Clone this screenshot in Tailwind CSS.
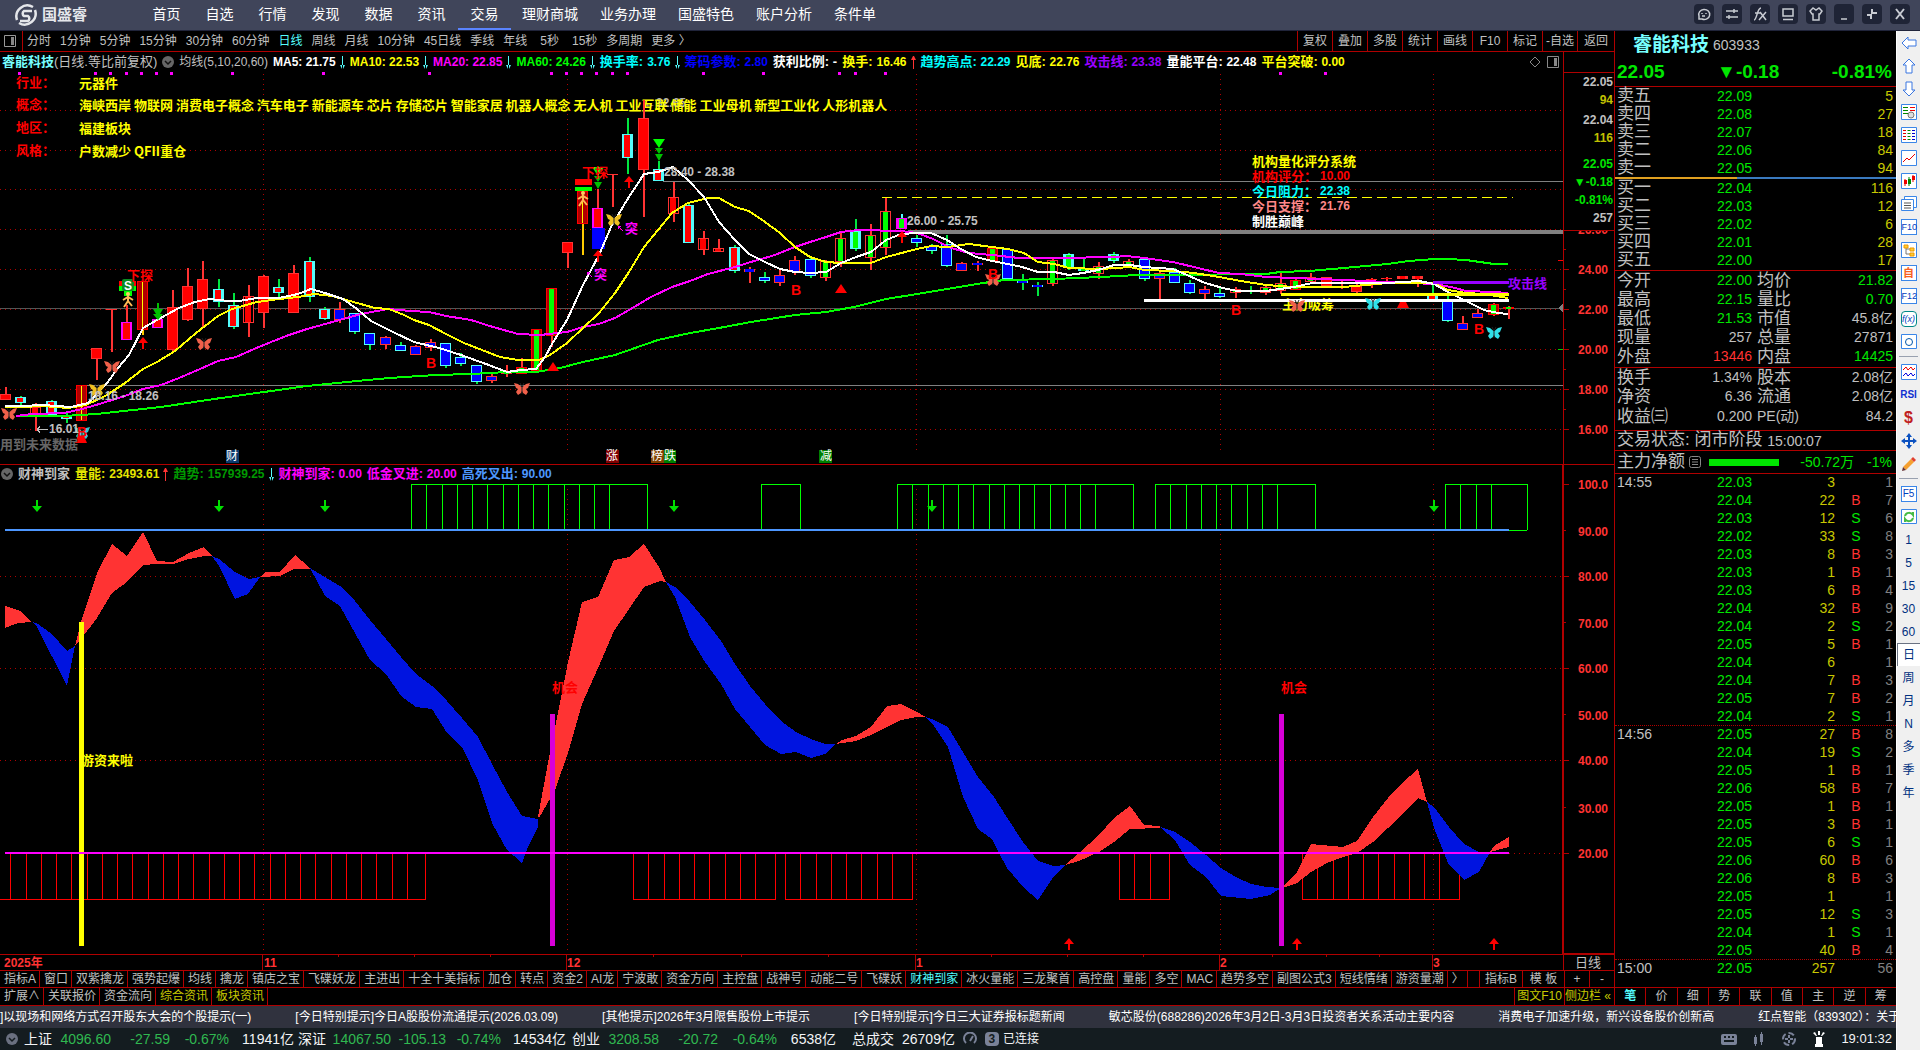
<!DOCTYPE html>
<html lang="zh-CN">
<head>
    <meta charset="UTF-8">
    <meta name="viewport" content="width=device-width, initial-scale=1.0">
    <title>睿能科技 603933</title>
    <script src="https://cdn.jsdelivr.net/npm/@tailwindcss/browser@4"></script>
</head>
<body class="min-h-screen flex flex-col bg-black text-[#c0c0c0] text-xs overflow-x-hidden font-['Liberation_Sans','Noto_Sans_CJK_SC',sans-serif]">

    <!-- shared symbols -->
    <svg class="hidden">
        <symbol id="butterfly" viewBox="0 0 16 14">
            <path d="M7.5 5 4 2 0 1l2 5 2 1-2 3 2 3 3-2 1-2 1 2 3 2 2-3-2-3 2-1 2-5-4 1-3.500 3z" fill="currentColor"/>
            <path d="M8 12V5M8 5 6 1M8 5l2-4" stroke="#222" stroke-width="1" fill="none"/>
        </symbol>
        <symbol id="runner" viewBox="0 0 12 16">
            <circle cx="6" cy="2" r="2" fill="#fc6"/>
            <path d="M6 4v5l-4 6M6 9l4 5M1 8l5-3 5 3" stroke="#fb5" stroke-width="2" fill="none"/>
        </symbol>
        <symbol id="up" viewBox="0 0 10 12">
            <path d="M5 0l5 6H6v6H4V6H0z" fill="currentColor"/>
        </symbol>
        <symbol id="down" viewBox="0 0 10 12">
            <path d="M5 12l5-6H6V0H4v6H0z" fill="currentColor"/>
        </symbol>
        <symbol id="thin-up" viewBox="0 0 5 13">
            <path d="M2 0h1v13H2zM0 4l2-4h1l2 4z" fill="currentColor"/>
        </symbol>
        <symbol id="thin-down" viewBox="0 0 5 13">
            <path d="M2 0h1v13H2zM0 9l2 4h1l2-4z" fill="currentColor"/>
        </symbol>
        <symbol id="triple" viewBox="0 0 12 24">
            <path d="M0 0h12L6 9z" fill="#0f0"/>
            <path d="M2 9h8l-4 6zM2 15h8l-4 7z" fill="#00c000"/>
        </symbol>
        <symbol id="fold" viewBox="0 0 12 12">
            <circle cx="6" cy="6" r="6" fill="#666"/>
            <path d="M3 5l3 3 3-3" stroke="#111" stroke-width="1.500" fill="none"/>
        </symbol>
    </svg>

    <!-- top menu -->
    <header class="h-[31px] flex items-center bg-[#40455a] border-b border-[#20243a] text-sm text-white">
        <div class="w-[140px] pl-3.5 flex items-center gap-1">
            <svg class="w-6 h-6" viewBox="0 0 24 24" fill="none" stroke="#e4e6ea" stroke-width="2.500">
                <path d="M19 4A11 11 0 0 0 3 17M5 20A11 11 0 0 0 21 7"/>
                <path d="M18 8h-8a3 3 0 0 0 0 5h4a3 3 0 0 1 0 5H6"/>
            </svg>
            <span class="text-[15px] font-bold text-gray-200">国盛睿</span>
        </div>
        <nav class="h-full flex text-center leading-[29px]">
            <a href="#" class="w-[53px]">首页</a>
            <a href="#" class="w-[53px]">自选</a>
            <a href="#" class="w-[53px]">行情</a>
            <a href="#" class="w-[53px]">发现</a>
            <a href="#" class="w-[53px]">数据</a>
            <a href="#" class="w-[53px]">资讯</a>
            <a href="#" class="w-[53px] border-b-2 border-[#5a84ff]">交易</a>
            <a href="#" class="w-[78px]">理财商城</a>
            <a href="#" class="w-[78px]">业务办理</a>
            <a href="#" class="w-[78px]">国盛特色</a>
            <a href="#" class="w-[78px]">账户分析</a>
            <a href="#" class="w-[64px]">条件单</a>
        </nav>
        <div class="ml-auto mr-2.5 flex gap-2 pb-0.5">
            <button class="w-5 h-5 rounded bg-[#1f2436] p-0.5" aria-label="消息"><svg viewBox="0 0 16 16" fill="none" stroke="#c8cbd2" stroke-width="1.500"><path d="M3 13v-3a5.500 5 0 1 1 3 3zM6 7v1M10 7v1M6 10h3"/></svg></button>
            <button class="w-5 h-5 rounded bg-[#1f2436] p-0.5" aria-label="切换"><svg viewBox="0 0 16 16" fill="none" stroke="#c8cbd2" stroke-width="1.500"><path d="M2 5h12M2 11h12M10 3v4M5 9v4"/></svg></button>
            <button class="w-5 h-5 rounded bg-[#1f2436] p-0.5" aria-label="公式"><svg viewBox="0 0 16 16" fill="none" stroke="#c8cbd2" stroke-width="1.500"><path d="M2 14c3 0 3-12 7-12M3 7h6M8 6l6 8M14 6l-7 8"/></svg></button>
            <button class="w-5 h-5 rounded bg-[#1f2436] p-0.5" aria-label="屏幕"><svg viewBox="0 0 16 16" fill="none" stroke="#c8cbd2" stroke-width="1.500"><path d="M3 3h10v7H3zM3 13.500h10"/></svg></button>
            <button class="w-5 h-5 rounded bg-[#1f2436] p-0.5" aria-label="皮肤"><svg viewBox="0 0 16 16" fill="none" stroke="#c8cbd2" stroke-width="1.500"><path d="M5 2 2 5l2 3h1v6h6V8h1l2-3-3-3-3 2z"/></svg></button>
            <button class="w-5 h-5 rounded bg-[#1f2436] p-0.5" aria-label="最小化"><svg viewBox="0 0 16 16" fill="none" stroke="#c8cbd2" stroke-width="1.500"><path d="M5 13h6"/></svg></button>
            <button class="w-5 h-5 rounded bg-[#1f2436] p-0.5" aria-label="还原"><svg viewBox="0 0 16 16" fill="none" stroke="#c8cbd2" stroke-width="2"><path d="M8 3v4h5M3 9h4v4"/></svg></button>
            <button class="w-5 h-5 rounded bg-[#1f2436] p-0.5" aria-label="关闭"><svg viewBox="0 0 16 16" fill="none" stroke="#c8cbd2" stroke-width="2"><path d="M4 3l8 10M12 3 4 13"/></svg></button>
        </div>
    </header>

    <div class="flex-1 flex">
        <div class="flex-1 min-w-0 flex flex-col">
            <div class="flex-1 flex">

                <!-- charts -->
                <main class="flex-1 min-w-0 flex flex-col">
                    <!-- period bar -->
                    <div class="h-[21px] flex items-center border-b border-[#b00000] whitespace-nowrap">
                        <button class="w-[23px] h-full flex items-center pl-1 border-r border-[#b00000] mr-1" aria-label="侧栏"><svg class="w-3 h-3" viewBox="0 0 12 12"><path d="M.5.5h11v11H.5z" fill="none" stroke="#999"/><path d="M7 2h3v8H7z" fill="#888"/></svg></button>
                        <nav class="flex gap-[9px]">
                            <a href="#">分时</a><a href="#">1分钟</a><a href="#">5分钟</a><a href="#">15分钟</a><a href="#">30分钟</a><a href="#">60分钟</a>
                            <a href="#" class="text-[#54fcfc]">日线</a><a href="#">周线</a><a href="#">月线</a><a href="#">10分钟</a><a href="#">45日线</a><a href="#">季线</a><a href="#">年线</a>
                            <a href="#" class="pl-1">5秒</a><a href="#" class="pl-1">15秒</a><a href="#">多周期</a><a href="#">更多 〉</a>
                        </nav>
                        <div class="ml-auto h-full flex text-center leading-5">
                            <button class="w-[35px] border-l border-[#b00000]">复权</button>
                            <button class="w-[35px] border-l border-[#b00000]">叠加</button>
                            <button class="w-[35px] border-l border-[#b00000]">多股</button>
                            <button class="w-[35px] border-l border-[#b00000]">统计</button>
                            <button class="w-[35px] border-l border-[#b00000]">画线</button>
                            <button class="w-[35px] border-l border-[#b00000]">F10</button>
                            <button class="w-[35px] border-l border-[#b00000]">标记</button>
                            <button class="w-[35px] border-l border-[#b00000]">-自选</button>
                            <button class="w-[37px] border-l border-[#b00000]">返回</button>
                        </div>
                    </div>

                    <!-- main chart legend -->
                    <div class="h-5 flex">
                        <div class="flex-1 flex items-center gap-[5px] pl-0.5 border-r border-[#b00000] text-[13px] font-bold leading-4 whitespace-nowrap">
                            <span class="text-[#7ff]">睿能科技<span class="font-normal text-[#c0c0c0]">(日线.等比前复权)</span></span>
                            <svg class="w-3 h-3"><use href="#fold"/></svg>
                            <span class="font-normal text-xs">均线(5,10,20,60)</span>
                            <span class="flex items-center gap-1 text-xs text-white">MA5: 21.75<svg class="w-[5px] h-[13px] text-[#54fcfc]"><use href="#thin-down"/></svg></span>
                            <span class="flex items-center gap-1 text-xs text-[#ff0]">MA10: 22.53<svg class="w-[5px] h-[13px] text-[#54fcfc]"><use href="#thin-down"/></svg></span>
                            <span class="flex items-center gap-1 text-xs text-[#f0f]">MA20: 22.85<svg class="w-[5px] h-[13px] text-[#54fcfc]"><use href="#thin-down"/></svg></span>
                            <span class="flex items-center gap-1 text-xs text-[#0f0]">MA60: 24.26<svg class="w-[5px] h-[13px] text-[#54fcfc]"><use href="#thin-down"/></svg></span>
                            <span class="flex items-center gap-1 text-[#0ff]">换手率: <b class="text-xs">3.76</b><svg class="w-[5px] h-[13px] text-[#54fcfc]"><use href="#thin-down"/></svg></span>
                            <span class="text-[#00f]">筹码参数: <b class="text-xs">2.80</b></span>
                            <span class="text-white">获利比例: -</span>
                            <span class="flex items-center gap-1 text-[#ff0]">换手: <b class="text-xs">16.46</b><svg class="w-[5px] h-[13px] text-[#f33]"><use href="#thin-up"/></svg></span>
                            <span class="text-[#0ff]">趋势高点: <b class="text-xs">22.29</b></span>
                            <span class="text-[#ff0]">见底: <b class="text-xs">22.76</b></span>
                            <span class="text-[#9900ff]">攻击线: <b class="text-xs">23.38</b></span>
                            <span class="text-white">量能平台: <b class="text-xs">22.48</b></span>
                            <span class="text-[#ff0]">平台突破: <b class="text-xs">0.00</b></span>
                            <svg class="ml-auto mr-1 w-[30px] h-3" viewBox="0 0 30 12" fill="none" stroke="#888"><path d="M6 1l5 5-5 5-5-5zM18.500.5h11v11h-11z"/><path d="M25 2h3v8h-3z" fill="#888" stroke="none"/></svg>
                        </div>
                        <div class="w-[50px]"></div>
                    </div>

                    <!-- main chart -->
                    <svg class="w-full h-auto block" viewBox="0 72 1614 392" font-size="13" font-weight="bold" dominant-baseline="central" shape-rendering="crispEdges">
                        <g stroke="#b00000" stroke-dasharray="1 4">
                            <path d="M0 110.500H1563M0 150.500H1563M0 189.500H1563M0 229.500H1563M0 269.500H1563M0 309.500H1563M0 349.500H1563M0 389.500H1563M0 429.500H1563"/>
                            <path d="M263.500 74V452M567.500 74V452M916.500 74V452M1220.500 74V452M1433.500 74V452"/>
                        </g>
                        <g id="dots"></g>
                        <path d="M663 181.500H1563M87 385.500H1563" stroke="#808080"/>
                        <path d="M0 308.500H1563" stroke="#555"/>
                        <path d="M908 230h655v4H908zM1558 308l5-4v9z" fill="#808080"/>
                        <path d="M882 197.500H1513" stroke="#ff0" stroke-dasharray="10 5"/>

                        <g fill="#f00">
                            <text x="16" y="82">行业：</text>
                            <text x="16" y="104">概念：</text>
                            <text x="16" y="127">地区：</text>
                            <text x="16" y="150">风格：</text>
                        </g>
                        <text x="644" y="103" fill="#b0b0b0" font-size="12">←32.65</text>
                        <g fill="#ff0" class="font-['Noto_Sans_CJK_SC',sans-serif]">
                            <text x="79" y="82">元器件</text>
                            <text x="79" y="104">海峡西岸 物联网 消费电子概念 汽车电子 新能源车 芯片 存储芯片 智能家居 机器人概念 无人机 工业互联 储能 工业母机 新型工业化 人形机器人</text>
                            <text x="79" y="127">福建板块</text>
                            <text x="79" y="150">户数减少 QFII重仓</text>
                        </g>

                        <g id="candles"></g>

                        <!-- moving averages -->
                        <g fill="none" stroke-width="2">
                            <polyline stroke="#0f0" points="16,416 64,416 96,414 161,407 214,399 264,392 307,386 357,381 389,378 436,375 471,374 507,372 536,372 560,368 583,362 615,355 658,340 690,333 719,328 751,322 795,315 826,312 854,307 886,299 917,294 947,289 983,283 1004,280 1054,279 1101,277 1137,275 1198,275 1237,274 1266,274 1280,272 1309,271 1344,268 1387,264 1409,261 1434,259 1448,259 1466,260 1494,264 1508,264"/>
                            <polyline stroke="#f0f" points="16,416 32,414 64,413 82,409 96,405 125,396 143,389 161,385 179,378 200,369 218,361 236,357 254,349 271,342 289,335 307,329 336,321 361,314 388,309 411,311 429,312 446,316 471,320 493,327 518,334 540,335 567,332 583,327 599,324 615,318 629,310 651,297 672,287 690,281 708,274 735,267 754,261 772,256 795,247 810,242 826,237 841,232 858,230 901,231 917,233 933,239 951,248 969,253 992,255 1019,258 1058,258 1114,257 1126,256 1144,258 1173,262 1198,268 1219,273 1241,274 1266,277 1294,278 1344,280 1387,282 1434,284 1451,287 1466,291 1494,292 1508,293"/>
                            <polyline stroke="#ff0" points="5,407 21,407 43,406 68,408 86,405 107,395 125,383 143,369 157,362 175,351 196,333 218,316 232,309 257,302 279,299 298,297 314,294 332,296 343,299 357,303 375,308 389,309 404,315 414,320 429,325 446,334 464,343 482,350 500,357 518,360 539,360 550,355 567,343 583,328 599,313 615,293 629,272 644,247 658,230 672,213 688,203 708,198 719,198 735,207 749,211 765,222 780,233 795,247 810,257 826,262 841,263 871,263 886,257 917,249 931,246 947,247 969,244 992,247 1008,249 1024,253 1038,262 1054,264 1069,268 1101,269 1130,267 1144,270 1173,271 1194,273 1219,277 1241,281 1266,285 1294,287 1323,287 1344,287 1387,283 1434,283 1448,290 1466,293 1484,294 1508,298"/>
                            <polyline stroke="#fff" points="5,406 21,406 43,405 71,407 88,403 107,383 118,368 129,355 143,328 157,320 179,308 195,302 209,299 229,301 239,301 257,298 279,298 298,294 311,289 325,293 343,299 357,309 371,321 393,332 414,342 439,348 461,355 486,364 507,372 521,370 536,369 545,357 552,344 567,320 583,285 599,255 611,227 627,200 644,174 658,172 673,167 688,180 704,197 719,222 735,240 749,254 765,262 780,269 795,272 810,273 826,272 841,263 856,257 871,252 886,240 901,234 917,233 931,233 947,240 961,249 976,257 992,261 1008,264 1022,267 1038,272 1054,272 1069,275 1083,273 1098,270 1114,265 1130,265 1144,267 1173,269 1187,275 1205,283 1223,288 1237,291 1266,291 1294,287 1312,283 1387,283 1419,281 1434,284 1448,292 1466,301 1484,310 1498,313 1508,314"/>
                        </g>
                        <text x="1282" y="304" fill="#ff0">主力吸筹</text>
                        <g fill="none" stroke-width="3">
                            <path d="M1433 282.500h76" stroke="#9900ff"/>
                            <path d="M1281 294.500h228" stroke="#ff0"/>
                            <path d="M1144 300.500h365" stroke="#fff"/>
                        </g>
                        <text x="1508" y="283" fill="#9900ff">攻击线</text>

                        <!-- markers -->
                        <g shape-rendering="auto">
                            <g id="butterflies"></g>
                            <path d="M75 443l3-7h6l3 7zM547 371l6-9 6 9zM835 293l6-9 6 9zM1397 308l3-6h6l3 6z" fill="#f00"/>
                            <g color="#f00">
                                <use href="#up" x="138" y="337" width="10" height="12"/>
                                <use href="#up" x="593" y="250" width="10" height="12"/>
                                <use href="#up" x="624" y="176" width="10" height="12"/>
                                <use href="#up" x="897" y="231" width="10" height="12"/>
                            </g>
                            <path d="M157 303h2v6h4l-3 5h3l-5 6-5-6h3l-3-5h4z" fill="#00c000"/>
                            <use href="#triple" x="653" y="139" width="12" height="24"/>
                            <use href="#triple" x="592" y="167" width="12" height="24"/>
                            <path d="M119 281h17v5h-17zM575 179h17v6h-17z" fill="#f00"/>
                            <path d="M119 286h17v5h-17zM575 187h17v4h-17zM124 291h8v5h-8z" fill="#0f0"/>
                            <rect x="122" y="279" width="12" height="12" rx="2" fill="#0a8a20"/>
                            <use href="#runner" x="122" y="292" width="12" height="16"/>
                            <use href="#runner" x="577" y="191" width="12" height="16"/>
                        </g>
                        <text x="124" y="286" fill="#fff" font-size="12">S</text>
                        <g fill="#f00">
                            <text x="127" y="275">下探</text>
                            <text x="582" y="172">下探</text>
                        </g>
                        <g fill="#f00" font-size="14">
                            <text x="77" y="432">B</text><text x="426" y="363">B</text><text x="791" y="290">B</text>
                            <text x="988" y="274">B</text><text x="1231" y="310">B</text><text x="1474" y="329">B</text>
                        </g>
                        <g fill="#f0f">
                            <text x="625" y="228">突</text><text x="594" y="274">突</text>
                            <path d="M618 226l5 5M618 226v3M618 226h3M587 272l5 5M587 272v3M587 272h3" stroke="#f0f"/>
                        </g>
                        <g fill="#c0c0c0" font-size="12">
                            <text x="88" y="396">18.16 - 18.26</text>
                            <text x="49" y="429">16.01</text>
                            <text x="664" y="172">28.40 - 28.38</text>
                            <text x="907" y="221">26.00 - 25.75</text>
                        </g>
                        <path d="M37 429.500h11M37 429.500l3-3M37 429.500l3 3" stroke="#c0c0c0"/>
                        <text x="0" y="444" fill="#666">用到未来数据</text>
                        <text x="1252" y="161" fill="#ff0">机构量化评分系统</text>
                        <text x="1252" y="176" fill="#f00">机构评分：</text><text x="1320" y="176" fill="#f00" font-size="12">10.00</text>
                        <text x="1252" y="191" fill="#0ff">今日阻力：</text><text x="1320" y="191" fill="#0ff" font-size="12">22.38</text>
                        <text x="1252" y="206" fill="#f88">今日支撑：</text><text x="1320" y="206" fill="#f88" font-size="12">21.76</text>
                        <text x="1252" y="221" fill="#fff">制胜巅峰</text>

                        <!-- event badges -->
                        <path d="M226 450h13v13h-13z" fill="#0a3a6e"/>
                        <path d="M606 450h13v13h-13z" fill="#800000"/>
                        <path d="M651 450h13v13h-13z" fill="#804000"/>
                        <path d="M664 450h12v13h-12zM819 450h13v13h-13z" fill="#008000"/>
                        <g fill="#fff" font-size="12" font-weight="normal">
                            <text x="226" y="456">财</text><text x="606" y="456">涨</text><text x="651" y="456">榜</text><text x="664" y="456">跌</text><text x="820" y="456">减</text>
                        </g>

                        <!-- price axis -->
                        <g fill="#f33" font-size="12" text-anchor="end">
                            <text x="1608" y="230">26.00</text><text x="1608" y="270">24.00</text><text x="1608" y="310">22.00</text>
                            <text x="1608" y="350">20.00</text><text x="1608" y="390">18.00</text><text x="1608" y="430">16.00</text>
                        </g>
                        <path d="M1564 72h50v158h-50z" fill="#000"/>
                        <path d="M1563.500 72V464M1564 72.500h50M1564 230.500h50M1564 269.500h5M1564 309.500h5M1564 349.500h5M1564 389.500h5M1564 429.500h5M1564 249.500h2M1564 289.500h2M1564 329.500h2M1564 369.500h2M1564 409.500h2" stroke="#b00000"/>
                        <path d="M1558 260.500h5" stroke="#f00"/><path d="M1558 349.500h5" stroke="#0c0"/>
                        <g font-size="12" text-anchor="end">
                            <g fill="#c0c0c0"><text x="1613" y="82">22.05</text><text x="1613" y="120">22.04</text><text x="1613" y="218">257</text></g>
                            <g fill="#c0c000"><text x="1613" y="100">94</text><text x="1613" y="138">116</text></g>
                            <g fill="#00e600"><text x="1613" y="164">22.05</text><text x="1613" y="182">▼-0.18</text><text x="1613" y="200">-0.81%</text></g>
                        </g>
                    </svg>

                    <!-- indicator legend -->
                    <div class="h-[19px] flex border-t border-[#b00000]">
                        <div class="flex-1 flex items-center gap-[5px] pl-px border-r-2 border-[#b00000] text-[13px] font-bold leading-4 whitespace-nowrap">
                            <svg class="w-3 h-3"><use href="#fold"/></svg>
                            <span>财神到家</span>
                            <span class="flex items-center gap-1 text-[#e6e600]">量能: <b class="text-xs">23493.61</b><svg class="w-[5px] h-[13px] text-[#f33]"><use href="#thin-up"/></svg></span>
                            <span class="flex items-center gap-1 text-[#090]">趋势: <b class="text-xs">157939.25</b><svg class="w-[5px] h-[13px] text-[#54fcfc]"><use href="#thin-down"/></svg></span>
                            <span class="text-[#f0f]">财神到家: <b class="text-xs">0.00</b></span>
                            <span class="text-[#f0f]">低金叉进: <b class="text-xs">20.00</b></span>
                            <span class="text-[#4d97ff]">高死叉出: <b class="text-xs">90.00</b></span>
                        </div>
                        <div class="w-[50px]"></div>
                    </div>

                    <!-- indicator chart -->
                    <svg class="w-full h-auto block overflow-visible" viewBox="0 483 1614 471" font-size="13" font-weight="bold" dominant-baseline="central" shape-rendering="crispEdges">
                        <g stroke="#b00000" stroke-dasharray="1 4">
                            <path d="M0 576.500H1563M0 668.500H1563M0 760.500H1563M1509 853.500H1563"/>
                            <path d="M263.500 484V954M567.500 484V954M916.500 484V954M1220.500 484V954M1433.500 484V954"/>
                        </g>
                        <g id="greenBoxes" stroke="#0f0" fill="none"></g>
                        <g id="redBoxes" stroke="#f00" fill="none"></g>

                        <g fill="#f33">
                            <polygon points="5,606 20,611 32,622 18,623 5,628"/>
                            <polygon points="75,646 81,622 97,573 112,544 127,556 143,532 157,561 173,562 189,553 204,547 212,556 204,556 189,559 173,564 157,564 143,565 127,582 112,593 97,618 81,639"/>
                            <polygon points="260,577 265,572 280,572 295,555 309,567 310,569 294,569 280,576"/>
                            <polygon points="538,817 549,757 554,733 568,662 582,602 598,597 614,560 629,557 644,544 659,567 666,582 660,581 644,587 629,609 614,631 598,668 582,704 568,753 555,790 539,818"/>
                            <polygon points="836,744 842,740 856,736 871,727 887,706 901,704 917,712 926,717 917,717 901,720 887,727 871,735 856,741"/>
                            <polygon points="1065,865 1079,853 1099,835 1114,818 1130,806 1144,825 1160,826 1160,828 1130,829 1114,842 1099,852 1079,861"/>
                            <polygon points="1282,888 1297,872 1311,844 1343,847 1357,841 1373,817 1388,798 1402,783 1418,769 1427,802 1418,798 1402,814 1388,828 1373,842 1357,853 1343,857 1327,863 1311,872 1297,883"/>
                            <polygon points="1490,852 1494,846 1509,837 1509,847"/>
                        </g>
                        <g fill="#0014e0">
                            <polygon points="32,622 38,624 52,634 67,651 75,646 67,686 37,627"/>
                            <polygon points="212,556 219,559 235,572 249,579 260,577 248,594 235,599 219,566"/>
                            <polygon points="310,568 325,577 340,586 355,601 370,620 386,639 401,657 416,674 432,686 447,701 462,718 478,737 492,764 507,792 522,816 538,819 538,827 528,847 522,863 507,850 492,823 478,780 462,747 447,733 432,709 416,707 401,696 386,674 370,660 355,633 340,606 325,596"/>
                            <polygon points="666,582 675,587 690,602 705,620 721,641 735,664 750,686 765,704 781,721 796,732 811,739 825,744 836,744 825,754 811,758 796,752 781,754 765,745 750,727 735,709 721,684 705,662 690,637 675,597"/>
                            <polygon points="925,717 932,719 948,727 963,752 978,777 994,797 1008,819 1023,842 1038,861 1054,866 1065,865 1054,876 1038,900 1024,888 1007,868 999,853 992,839 978,829 963,797 948,747 932,723"/>
                            <polygon points="1160,827 1175,832 1190,842 1206,855 1221,868 1236,877 1251,884 1266,887 1281,888 1270,895 1251,899 1221,896 1206,877 1190,865 1175,840"/>
                            <polygon points="1427,802 1434,807 1449,827 1464,844 1479,852 1490,852 1479,872 1464,880 1448,863 1434,828"/>
                        </g>

                        <path d="M5 530H1509" stroke="#4d97ff" stroke-width="2"/>
                        <path d="M81.500 622V946" stroke="#ff0" stroke-width="5"/>
                        <path d="M552.500 714V946M1281.500 714V946" stroke="#d800d8" stroke-width="5"/>
                        <path d="M5 853H1509" stroke="#f0f" stroke-width="2"/>
                        <g id="arrows" shape-rendering="auto"></g>
                        <text x="81" y="760" fill="#ff0">游资来啦</text>
                        <text x="552" y="687" fill="#f00">机会</text>
                        <text x="1281" y="687" fill="#f00">机会</text>

                        <g fill="#f33" font-size="12" text-anchor="end">
                            <text x="1608" y="485">100.0</text><text x="1608" y="532">90.00</text><text x="1608" y="577">80.00</text>
                            <text x="1608" y="624">70.00</text><text x="1608" y="669">60.00</text><text x="1608" y="716">50.00</text>
                            <text x="1608" y="761">40.00</text><text x="1608" y="809">30.00</text><text x="1608" y="854">20.00</text>
                        </g>
                        <path d="M1563 483V954" stroke="#b00000" stroke-width="2"/>
                        <path d="M1564 484.500h5M1564 530.500h2M1564 576.500h5M1564 622.500h2M1564 668.500h5M1564 714.500h2M1564 760.500h5M1564 807.500h2M1564 853.500h5M1563 953.500h51" stroke="#b00000"/>
                    </svg>

                    <!-- date axis -->
                    <svg class="w-full h-auto block" viewBox="0 954 1614 16" font-size="12" font-weight="bold" dominant-baseline="central">
                        <path d="M0 954.500H1614M262.500 954v16M566.500 954v16M915.500 954v16M1219.500 954v16M1432.500 954v16M1563.500 954v16M338.500 954v3M414.500 954v3M490.500 954v3M653.500 954v3M741.500 954v3M828.500 954v3M991.500 954v3M1067.500 954v3M1143.500 954v3M1272.500 954v3M1326.500 954v3M1379.500 954v3" stroke="#b00000" shape-rendering="crispEdges"/>
                        <g fill="#f33"><text x="4" y="963">2025年</text><text x="264" y="963">11</text><text x="567" y="963">12</text><text x="916" y="963">1</text><text x="1220" y="963">2</text><text x="1433" y="963">3</text></g>
                        <text x="1575" y="962" fill="#c0c0c0" font-size="13" font-weight="normal">日线</text>
                    </svg>

                    <!-- indicator tabs -->
                    <div class="h-[17px] flex border-t border-[#b00000] leading-4 whitespace-nowrap">
                        <nav class="flex" id="tabs"></nav>
                        <div class="ml-auto flex text-center">
                            <button class="w-[43px] border-l border-[#b00000]">指标B</button>
                            <button class="w-[42px] border-l border-[#b00000]">模 板</button>
                            <button class="w-[25px] border-l border-[#b00000]">+</button>
                            <button class="w-[25px] border-l border-[#b00000]">-</button>
                        </div>
                    </div>
                    <div class="h-[18px] flex border-t border-[#b00000] leading-[17px] whitespace-nowrap">
                        <a href="#" class="pl-1 pr-[3px] border-r border-[#b00000]">扩展∧</a>
                        <a href="#" class="pl-1 pr-[3px] border-r border-[#b00000]">关联报价</a>
                        <a href="#" class="pl-1 pr-[3px] border-r border-[#b00000]">资金流向</a>
                        <a href="#" class="pl-1 pr-[3px] border-r border-[#b00000] text-[#c8c800]">综合资讯</a>
                        <a href="#" class="pl-1 pr-[3px] border-r border-[#b00000] text-[#c8c800]">板块资讯</a>
                        <a href="#" class="ml-auto w-[50px] border-l border-[#b00000] text-center text-[#c8c800]">图文F10</a>
                        <a href="#" class="w-[50px] border-l border-[#b00000] text-[#c8c800]">侧边栏 «</a>
                    </div>
                </main>

                <!-- quote panel -->
                <aside class="w-[282px] flex flex-col border-l border-[#b00000] text-sm">
                    <div class="h-14 pl-0.5 pr-1 border-b border-[#b00000]">
                        <h1 class="pl-4 h-7 flex items-center gap-1 text-[19px] font-bold text-[#7ff]">睿能科技 <span class="text-sm font-normal text-[#c0c0c0]">603933</span></h1>
                        <div class="flex justify-between items-center h-[26px] text-[19px] font-bold text-[#00e600]"><span>22.05</span><span>▼-0.18</span><span>-0.81%</span></div>
                    </div>
                    <table class="w-full"><tbody id="asks"></tbody></table>
                    <div class="flex h-0.5"><div class="flex-1 bg-[#e0a020]"></div><div class="flex-1 bg-[#3a7abf]"></div><div class="w-[38px] bg-[#3a7abf]"></div></div>
                    <table class="w-full mb-px"><tbody id="bids"></tbody></table>
                    <table class="w-full mb-px border-t border-[#b00000]"><tbody id="stats"></tbody></table>
                    <table class="w-full border-t border-[#b00000] mb-1"><tbody id="stats2"></tbody></table>
                    <div class="h-5 pl-0.5 flex items-center border-t border-[#b00000] text-[17px] whitespace-nowrap">交易状态: 闭市阶段&nbsp;<span class="text-sm">15:00:07</span></div>
                    <div class="h-[23px] pl-0.5 pr-1 flex items-center border-t border-[#b00000] text-[17px] whitespace-nowrap">
                        主力净额
                        <svg class="ml-1 w-3 h-3" viewBox="0 0 12 12" fill="none" stroke="#888"><rect x=".5" y=".5" width="11" height="11" rx="2"/><path d="M3 3.500h6M3 6h6M3 8.500h6"/></svg>
                        <div class="ml-2 w-[70px] h-[7px] bg-[#00e600]"></div>
                        <span class="ml-auto text-sm text-[#00e600]">-50.72万</span><span class="w-[38px] text-right text-sm text-[#00e600]">-1%</span>
                    </div>
                    <table class="w-full border-t border-[#b00000]"><tbody id="ticks"></tbody></table>
                    <nav class="mt-auto h-[18px] flex border-t border-[#b00000] text-xs text-center leading-[17px]">
                        <a href="#" class="flex-1 border-r border-[#b00000] text-[#54fcfc] font-bold">笔</a>
                        <a href="#" class="flex-1 border-r border-[#b00000]">价</a>
                        <a href="#" class="flex-1 border-r border-[#b00000]">细</a>
                        <a href="#" class="flex-1 border-r border-[#b00000]">势</a>
                        <a href="#" class="flex-1 border-r border-[#b00000]">联</a>
                        <a href="#" class="flex-1 border-r border-[#b00000]">值</a>
                        <a href="#" class="flex-1 border-r border-[#b00000]">主</a>
                        <a href="#" class="flex-1 border-r border-[#b00000]">逆</a>
                        <a href="#" class="flex-1">筹</a>
                    </nav>
                </aside>
            </div>

            <!-- news -->
            <div class="h-[23px] flex items-center gap-11 overflow-hidden border-t border-[#b00000] bg-[#30323e] text-white whitespace-nowrap">
                <a href="#">]以现场和网络方式召开股东大会的个股提示(一)</a>
                <a href="#">[今日特别提示]今日A股股份流通提示(2026.03.09)</a>
                <a href="#">[其他提示]2026年3月限售股份上市提示</a>
                <a href="#">[今日特别提示]今日三大证券报标题新闻</a>
                <a href="#">敏芯股份(688286)2026年3月2日-3月3日投资者关系活动主要内容</a>
                <a href="#">消费电子加速升级，新兴设备股价创新高</a>
                <a href="#">红点智能（839302）：关于</a>
            </div>

            <!-- status bar -->
            <footer class="h-[22px] flex items-center bg-[#141c20] text-sm text-gray-100 whitespace-nowrap">
                <svg class="ml-1.5 mr-1.5 w-3 h-3" viewBox="0 0 12 12"><circle cx="6" cy="6" r="6" fill="#6a7080"/><path d="M3 5l3 3 3-3" stroke="#141c20" stroke-width="1.500" fill="none"/></svg>
                <div class="flex text-right text-[#30b850]"><span class="text-gray-100">上证</span><span class="w-[59px]">4096.60</span><span class="w-[59px]">-27.59</span><span class="w-[59px]">-0.67%</span><span class="w-[65px] text-gray-100">11941亿</span></div>
                <div class="ml-1 flex text-right text-[#30b850]"><span class="text-gray-100">深证</span><span class="w-[65px]">14067.50</span><span class="w-[55px]">-105.13</span><span class="w-[55px]">-0.74%</span><span class="w-[65px] text-gray-100">14534亿</span></div>
                <div class="ml-1.5 flex text-right text-[#30b850]"><span class="text-gray-100">创业</span><span class="w-[59px]">3208.58</span><span class="w-[59px]">-20.72</span><span class="w-[59px]">-0.64%</span><span class="w-[59px] text-gray-100">6538亿</span></div>
                <span class="ml-4">总成交</span><span class="ml-2">26709亿</span>
                <svg class="ml-2 w-3.5 h-3.5" viewBox="0 0 14 14" fill="none" stroke="#7a8298" stroke-width="2"><path d="M3 11A6 6 0 1 1 11 11M7 9l3-5"/></svg>
                <span class="ml-2 w-3.5 h-3.5 rounded bg-[#7a8298] text-xs leading-[14px] text-center text-[#141c20] font-bold">3</span>
                <span class="ml-1 text-xs">已连接</span>
                <div class="ml-auto mr-1 flex items-center gap-3.5">
                    <svg class="w-4 h-4" viewBox="0 0 16 16" fill="#7a8298"><rect y="3" width="16" height="11" rx="2"/><path d="M3 5h2v2H3zM7 5h2v2H7zM11 5h2v2h-2zM3 9h10v2H3z" fill="#141c20"/></svg>
                    <svg class="w-4 h-4" viewBox="0 0 16 16" fill="#7a8298"><path d="M3 6h3v7H3zM4 4h1v11H4zM9 3h3v8H9zM10 1h1v13h-1z"/></svg>
                    <svg class="w-4 h-4" viewBox="0 0 16 16" fill="none" stroke="#7a8298" stroke-width="2"><circle cx="8" cy="8" r="6" stroke-dasharray="6 3"/><path d="M8 4v3M8 9v3M4 8h3M9 8h3"/></svg>
                    <svg class="w-4 h-4" viewBox="0 0 16 16" fill="#fff"><path d="M5 6h6v7h1v3H4v-3h1zM4 1l2 4H5L2 2zM12 1l-2 4h1l3-3zM7 0h2v4H7z"/></svg>
                    <span class="text-[13px]">19:01:32</span>
                </div>
            </footer>
        </div>

        <!-- tool strip -->
        <div class="w-6 flex flex-col bg-[#f0f0f0] border-l border-white text-xs text-[#003080]">
            <button class="h-[23px] grid place-items-center" aria-label="后退"><svg class="w-4 h-4" viewBox="0 0 16 16" fill="#fff" stroke="#3a76e0"><path d="M1 8l6-6v3h8v6H7v3z"/></svg></button>
            <button class="h-[23px] grid place-items-center" aria-label="上"><svg class="w-4 h-4" viewBox="0 0 16 16" fill="#fff" stroke="#3a76e0"><path d="M8 1l6 6h-3v8H5V7H2z"/></svg></button>
            <button class="h-[23px] grid place-items-center" aria-label="下"><svg class="w-4 h-4" viewBox="0 0 16 16" fill="#fff" stroke="#3a76e0"><path d="M8 15l6-6h-3V1H5v8H2z"/></svg></button>
            <button class="h-[23px] grid place-items-center" aria-label="自选"><svg class="w-4 h-4" viewBox="0 0 16 16" fill="none"><path d="M.5.5h15v15H.5z" fill="#fff" stroke="#3a86e8"/><path d="M2 3.500h5M2 6.500h5M2 9.500h5" stroke="#080"/><path d="M9 3.500h5M9 6.500h5" stroke="#e00"/><circle cx="10" cy="11" r="3" stroke="#777" fill="#ddd"/></svg></button>
            <button class="h-[23px] grid place-items-center" aria-label="行情"><svg class="w-4 h-4" viewBox="0 0 16 16" fill="none"><path d="M.5.5h15v15H.5z" fill="#fff" stroke="#3a86e8"/><path d="M2 3.500h3M2 6.500h3M2 9.500h3M2 12.500h3" stroke="#d00"/><path d="M6.500 3.500h3M6.500 6.500h3M6.500 9.500h3M6.500 12.500h3" stroke="#080"/><path d="M11 3.500h3M11 6.500h3M11 9.500h3M11 12.500h3" stroke="#00c"/></svg></button>
            <button class="h-[23px] grid place-items-center" aria-label="分时"><svg class="w-4 h-4" viewBox="0 0 16 16" fill="none"><path d="M.5.5h15v15H.5z" fill="#fff" stroke="#3a86e8"/><path d="M2 12l4-4 2 2 6-6" stroke="#e00"/></svg></button>
            <button class="h-[23px] grid place-items-center" aria-label="K线"><svg class="w-4 h-4" viewBox="0 0 16 16" fill="none"><path d="M.5.5h15v15H.5z" fill="#fff" stroke="#3a86e8"/><path d="M4 6v7M12 2v7" stroke="#e00"/><path d="M8 4v9" stroke="#080"/><path d="M3 7h3v4H3zM11 3h3v4h-3z" fill="#e00"/><path d="M7 6h3v5H7z" fill="#080"/></svg></button>
            <button class="h-[23px] grid place-items-center" aria-label="多窗"><svg class="w-4 h-4" viewBox="0 0 16 16" fill="#fff" stroke="#3a86e8"><path d="M3.500.5h12v11h-12z"/><path d="M.5 3.500h12v11H.5z"/><path d="M3 7h7M3 9.500h7M3 12h7" stroke="#555"/></svg></button>
            <button class="h-[23px] grid place-items-center"><span class="w-4 h-4 border border-[#3a86e8] bg-white text-[9px] leading-3.5 text-center text-[#0040c0]">F10</span></button>
            <button class="h-[23px] grid place-items-center" aria-label="树"><svg class="w-4 h-4" viewBox="0 0 16 16" fill="none"><path d="M.5.5h15v15H.5z" fill="#fff" stroke="#3a86e8"/><path d="M5 5v7h5M5 7h5" stroke="#777"/><path d="M3 3h4v3H3zM9 6h4v3H9zM9 11h4v3H9z" fill="#fc3" stroke="#e90"/></svg></button>
            <button class="h-[23px] grid place-items-center"><span class="w-4 h-4 border border-[#3a86e8] bg-white text-[11px] leading-3.5 text-center font-bold text-[#f86020]">自</span></button>
            <button class="h-[23px] grid place-items-center"><span class="w-4 h-4 border border-[#3a86e8] bg-white text-[9px] leading-3.5 text-center text-[#0040c0]">F12</span></button>
            <button class="h-[23px] grid place-items-center"><span class="w-4 h-4 border border-[#088] rounded bg-white text-[9px] leading-3.5 text-center italic text-[#0040c0]">f(x)</span></button>
            <button class="h-[23px] grid place-items-center" aria-label="圈"><svg class="w-4 h-4" viewBox="0 0 16 16" fill="#fff"><path d="M.5.5h15v14H.5z" stroke="#3a86e8"/><circle cx="8" cy="8" r="3.500" stroke="#05a"/></svg></button>
            <hr class="my-[3px] mx-0.5 border-gray-400">
            <button class="h-[23px] grid place-items-center" aria-label="指标"><svg class="w-4 h-4" viewBox="0 0 16 16" fill="none"><path d="M.5.5h15v15H.5z" fill="#fff" stroke="#3a86e8"/><path d="M2 6l3-3 2 3 3-3 2 3 2-2" stroke="#e00"/><path d="M2 12l3-3 2 3 3-3 2 3 2-2" stroke="#00d"/></svg></button>
            <button class="h-[23px] text-[10px] font-bold text-[#1030d0]">RSI</button>
            <button class="h-[23px] text-base font-bold text-[#c02020]">$</button>
            <button class="h-[23px] grid place-items-center" aria-label="移动"><svg class="w-4 h-4" viewBox="0 0 16 16" fill="#0a50c0"><path d="M8 0l3 4H9v3h3V5l4 3-4 3V9H9v3h2l-3 4-3-4h2V9H4v2L0 8l4-3v2h3V4H5z"/></svg></button>
            <button class="h-[23px] grid place-items-center" aria-label="画笔"><svg class="w-4 h-4" viewBox="0 0 16 16"><path d="M2 11l8-8 3 3-8 8z" fill="#f5a030"/><path d="M10 3l2-2 3 3-2 2z" fill="#e04030"/><path d="M1 15l1-4 3 3z" fill="#633"/></svg></button>
            <hr class="my-[3px] mx-0.5 border-gray-400">
            <button class="h-[23px] grid place-items-center"><span class="w-4 h-4 border border-[#3a86e8] bg-white text-[10px] leading-3.5 text-center text-[#0040c0]">F5</span></button>
            <button class="h-[23px] grid place-items-center" aria-label="刷新"><svg class="w-4 h-4" viewBox="0 0 16 16" fill="none" stroke-width="2"><path d="M.5.5h15v14H.5z" fill="#fff" stroke="#3a86e8" stroke-width="1"/><path d="M4 7c1-4 6-4 8-1V3M12 9c-1 4-6 4-8 1v3" stroke="#4b4"/></svg></button>
            <button class="h-[23px]">1</button>
            <button class="h-[23px]">5</button>
            <button class="h-[23px]">15</button>
            <button class="h-[23px]">30</button>
            <button class="h-[23px]">60</button>
            <button class="h-[23px] border-t border-l border-gray-500 bg-white">日</button>
            <button class="h-[23px]">周</button>
            <button class="h-[23px]">月</button>
            <button class="h-[23px]">N</button>
            <button class="h-[23px]">多</button>
            <button class="h-[23px]">季</button>
            <button class="h-[23px]">年</button>
        </div>
    </div>

<script>
    const $ = id => document.getElementById(id);

    // candle kinds: outer fill, outer stroke, inner fill, inner width, wick
    const kinds = {
        R:  ['#f00', '#f33', '#f00', 5, '#f33'],
        r:  ['#000', '#f33', '#f00', 6, '#f33'],
        D:  ['#b00000', '#f00', '#ff0', 1, '#fc0'],
        T:  ['#c0c0c0', '#f33', '#f33', 1, '#f33'],
        M:  ['#f0f', '#f0f', '#f00', 7, '#f33'],
        MG: ['#f0f', '#f0f', '#0f0', 5, '#54fcfc'],
        C:  ['#54fcfc', '#54fcfc', '#f00', 6, '#00e640'],
        CB: ['#54fcfc', '#54fcfc', '#00f', 9, '#00e640'],
        CG: ['#54fcfc', '#54fcfc', '#0f0', 5, '#00e640'],
        RB: ['#f33', '#f33', '#00f', 9, '#f33'],
        RG: ['#000', '#f33', '#0f0', 5, '#f33'],
        G:  ['#b00000', '#f00', '#0f0', 5, '#f33']
    };
    // kind, high, top, bottom, low
    const candles = [
        ['R',387,394,400,400],['C',396,397,403,407],['r',403,407,416,431],['C',400,401,415,417],['C',413,415,419,423],
        ['D',385,385,421,421],['R',348,348,359,380],['T',309,309,310,352],['M',305,322,340,340],['D',281,281,330,335],
        ['M',319,319,328,328],['R',290,307,350,353],['R',268,286,320,321],['R',261,279,309,327],['C',279,289,302,307],
        ['C',293,305,327,329],['r',285,296,323,337],['R',275,276,313,328],['C',279,287,293,297],['R',265,273,313,313],
        ['C',257,261,297,302],['C',307,309,319,320],['RB',302,309,320,323],['CB',313,313,332,334],['CB',333,333,345,350],
        ['RB',336,337,345,349],['CB',342,345,351,351],['RB',345,346,355,355],['RB',339,342,348,351],['CB',343,343,366,368],
        ['CB',353,357,364,366],['CB',365,365,382,384],['RB',374,376,381,383],['RG',365,371,374,377],['G',358,367,374,374],
        ['G',329,329,371,371],['G',288,288,336,347],['R',242,242,253,268],['D',191,191,224,255],['M',189,208,228,249],
        ['T',174,174,175,207],['C',118,134,158,174],['R',100,118,170,217],['C',161,169,181,181],['r',182,197,214,222],
        ['C',204,205,243,243],['r',231,238,250,255],['r',239,248,252,252],['C',245,247,271,273],['RB',267,269,272,283],
        ['CB',272,277,281,283],['RB',270,275,283,286],['RB',256,260,272,275],['CB',256,259,276,278],['RG',260,261,278,281],
        ['RG',233,238,262,267],['CG',219,231,249,251],['RG',224,235,258,270],['RG',198,211,248,255],['MG',214,218,229,229],
        ['CB',235,238,243,247],['CB',244,246,251,254],['CB',235,244,266,267],['RB',262,263,271,271],['RB',261,263,265,271],
        ['G',248,248,261,261],['CB',248,249,279,279],['CB',274,281,283,290],['CB',282,285,287,296],['RG',259,260,284,286],
        ['CG',253,254,268,270],['CG',259,268,271,271],['RG',262,266,274,279],['CG',252,254,261,263],['RG',259,261,266,267],
        ['CB',257,259,279,281],['RB',272,273,279,299],['CB',268,272,283,283],['CB',280,283,293,294],['RB',286,289,294,299],
        ['CB',287,293,297,298],['RG',287,289,293,298],['CG',286,290,291,294],['RG',284,287,293,295],['RG',273,283,291,294],
        ['G',279,280,290,290],['RG',273,277,282,283],['R',277,277,286,286],['R',279,286,287,289],['R',280,286,292,293],
        ['R',278,279,280,288],['R',277,278,279,283],['R',276,276,279,279],['R',276,276,279,287],['C',283,296,299,299],
        ['CB',295,301,321,322],['RB',316,323,330,330],['RB',309,313,318,318],['G',303,304,315,316],['G',306,307,309,319]
    ];
    const rect = (x, y, w, h, fill) => `<rect x="${x}" y="${y}" width="${w}" height="${h}" fill="${fill}"/>`;
    $('candles').innerHTML = candles.map(([k, hi, top, bot, lo], i) => {
        const [fill, edge, inner, iw, wick] = kinds[k];
        const x = Math.round(5 + i * 15.18), h = Math.max(bot - top, 1);
        let s = rect(x, hi, 2, lo - hi, wick) + rect(x - 5, top, 11, h, edge);
        if (h > 3) s += rect(x - 4, top + 1, 9, h - 2, fill);
        return s + rect(x - (iw >> 1), top + (h > 3 ? 1 : 0), iw, h > 3 ? h - 2 : h, inner);
    }).join('') + rect(592, 228, 13, 21, '#00f');

    $('dots').innerHTML = [19,95,110,126,141,156,171,232,323,429,551,566,581,596,612,627,703,763,839,855,885,1280,1325]
        .map(x => rect(x - 1, 72, 3, 3, '#f0f')).join('');

    $('butterflies').innerHTML = [[9,414,'#f0604a'],[112,367,'#f0604a'],[204,344,'#f0604a'],[522,389,'#f0604a'],[993,280,'#f0604a'],[1297,306,'#f0604a'],
        [97,390,'#f0c020'],[614,220,'#f0c020'],[82,433,'#30c8d0'],[1373,304,'#30e0e8'],[1494,333,'#30e0e8']]
        .map(([x, y, c]) => `<use href="#butterfly" x="${x - 8}" y="${y - 7}" width="16" height="14" color="${c}"/>`).join('');

    // left edge, number of inner bars, right edge
    const boxes = (list, top, bottom) => list.map(([l, n, r]) => {
        let d = `M${l}.5 ${bottom}V${top}.5H${r}.5V${bottom}`;
        for (let i = 1; i <= n; i++) d += `M${Math.round(l + i * 15.25)}.5 ${top}V${bottom}`;
        return `<path d="${d}"/>`;
    }).join('');
    $('greenBoxes').innerHTML = boxes([[411,13,647],[761,0,800],[897,13,1133],[1155,8,1315],[1445,3,1527]], 484, 530) + '<path d="M1509 530.5h18"/>';
    $('redBoxes').innerHTML = boxes([[-5,27,425],[633,8,775],[785,7,912],[1119,2,1169],[1302,9,1459]], 899, 853);

    $('arrows').innerHTML = [37,219,325,674,932,1434].map(x => `<use href="#down" x="${x - 5}" y="500" width="10" height="12" color="#00e000"/>`).join('')
        + [1069,1297,1494].map(x => `<use href="#up" x="${x - 5}" y="938" width="10" height="12" color="#f00"/>`).join('');

    $('tabs').innerHTML = '指标A 窗口 双紫擒龙 强势起爆 均线 擒龙 镇店之宝 飞碟妖龙 主进出 十全十美指标 加仓 转点 资金2 AI龙 宁波敢 资金方向 主控盘 战神号 动能二号 飞碟妖 财神到家 冰火量能 三龙聚首 高控盘 量能 多空 MAC 趋势多空 副图公式3 短线情绪 游资量潮 〉'
        .split(' ').map(t => `<a href="#" class="pl-1 pr-[3px] border-r border-[#b00000] ${t === '财神到家' ? 'text-[#54fcfc]' : ''}">${t}</a>`).join('');

    const depth = rows => rows.map(([n, p, q]) =>
        `<tr class="h-[18px] leading-[18px]"><th class="w-[68px] p-0 pl-0.5 text-left font-normal text-[17px]">${n}</th><td class="w-[69px] p-0 text-right text-[#00e600]">${p}</td><td class="p-0 pr-[3px] text-right text-[#c8c800]">${q}</td></tr>`).join('');
    $('asks').innerHTML = depth([['卖五','22.09',5],['卖四','22.08',27],['卖三','22.07',18],['卖二','22.06',84],['卖一','22.05',94]]);
    $('bids').innerHTML = depth([['买一','22.04',116],['买二','22.03',12],['买三','22.02',6],['买四','22.01',28],['买五','22.00',17]]);

    const colors = { g: 'text-[#00e600]', r: 'text-[#ff3232]', w: '' };
    const stats = rows => rows.map(([a, x, cx, b, y, cy]) =>
        `<tr class="h-[19px] leading-[19px]"><th class="w-[68px] p-0 pl-0.5 text-left font-normal text-[17px] whitespace-nowrap">${a}</th><td class="w-[69px] p-0 text-right ${colors[cx]}">${x}</td><th class="p-0 pl-[5px] text-left font-normal text-[17px]">${b}</th><td class="p-0 pr-[3px] text-right ${colors[cy]}">${y}</td></tr>`).join('');
    $('stats').innerHTML = stats([
        ['今开','22.00','g','均价','21.82','g'],['最高','22.15','g','量比','0.70','g'],['最低','21.53','g','市值','45.8亿','w'],
        ['现量','257','w','总量','27871','w'],['外盘','13446','r','内盘','14425','g']]);
    $('stats2').innerHTML = stats([
        ['换手','1.34%','w','股本','2.08亿','w'],['净资','6.36','w','流通','2.08亿','w'],['收益㈢','0.200','w','<span class="text-sm">PE(动)</span>','84.2','w']]);

    // time, price, volume, side, count
    const ticks = [
        ['14:55','22.03',3,'',1],['','22.04',22,'B',7],['','22.03',12,'S',6],['','22.02',33,'S',8],['','22.03',8,'B',3],['','22.03',1,'B',1],
        ['','22.03',6,'B',4],['','22.04',32,'B',9],['','22.04',2,'S',2],['','22.05',5,'B',1],['','22.04',6,'',1],['','22.04',7,'B',3],
        ['','22.05',7,'B',2],['','22.04',2,'S',1],['14:56','22.05',27,'B',8],['','22.04',19,'S',2],['','22.05',1,'B',1],['','22.06',58,'B',7],
        ['','22.05',1,'B',1],['','22.05',3,'B',1],['','22.05',6,'S',1],['','22.06',60,'B',6],['','22.06',8,'B',3],['','22.05',1,'',1],
        ['','22.05',12,'S',3],['','22.04',1,'S',1],['','22.05',40,'B',4],['15:00','22.05',257,'',56]
    ];
    $('ticks').innerHTML = ticks.map(([t, p, v, s, n], i) =>
        `<tr class="h-[18px] leading-[17px] ${t && i ? 'border-t border-dotted border-[#b00000]' : ''}"><td class="w-[68px] p-0 pl-0.5">${t}</td><td class="w-[69px] p-0 text-right text-[#00e600]">${p}</td><td class="w-[83px] p-0 text-right text-[#c8c800]">${v}</td><td class="w-[42px] p-0 text-center ${s === 'B' ? 'text-[#ff3232]' : 'text-[#00e600]'}">${s}</td><td class="p-0 pr-[3px] text-right text-[#808080]">${n}</td></tr>`).join('');
</script>
</body>
</html>
